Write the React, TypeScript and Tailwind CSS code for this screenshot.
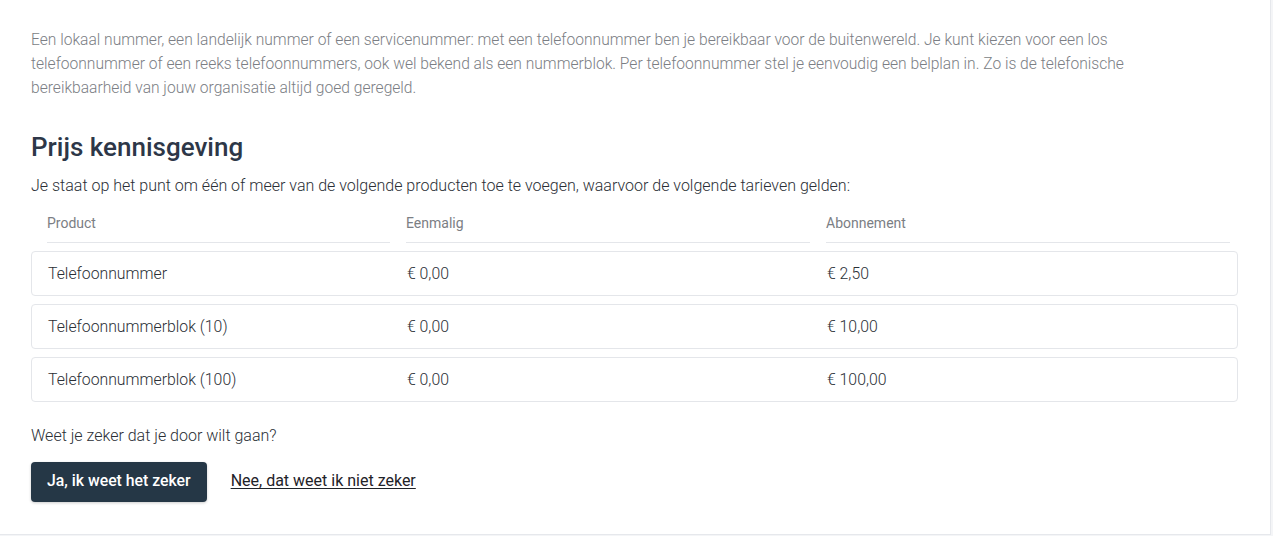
import React from "react";

const rows = [
  { product: "Telefoonnummer", once: "€ 0,00", sub: "€ 2,50" },
  { product: "Telefoonnummerblok (10)", once: "€ 0,00", sub: "€ 10,00" },
  { product: "Telefoonnummerblok (100)", once: "€ 0,00", sub: "€ 100,00" },
];

export default function App() {
  return (
    <div className="min-h-[536px] w-full bg-[#f4f5f7]" style={{ fontFamily: "Roboto, 'Noto Sans', sans-serif" }}>
      <div className="w-[1271px] h-[535px] bg-white border-r border-b border-[#e6e8ec] pl-[31px] pr-[32px] pt-[28px]">
        <p className="max-w-[1140px] text-[15.6px] leading-[24px] font-light text-[#7b7e84]">
          Een lokaal nummer, een landelijk nummer of een servicenummer: met een telefoonnummer ben je bereikbaar voor de buitenwereld. Je kunt kiezen voor een los telefoonnummer of een reeks telefoonnummers, ook wel bekend als een nummerblok. Per telefoonnummer stel je eenvoudig een belplan in. Zo is de telefonische bereikbaarheid van jouw organisatie altijd goed geregeld.
        </p>
        <h2 className="mt-[31px] text-[26px] leading-[32px] font-medium text-[#2d3748]">Prijs kennisgeving</h2>
        <p className="mt-[11px] text-[16px] leading-[24px] font-light text-[#2b2f36]">
          Je staat op het punt om één of meer van de volgende producten toe te voegen, waarvoor de volgende tarieven gelden:
        </p>
        <div className="mt-[14px] grid grid-cols-[343px_404px_404px] gap-x-4 pl-4 pr-2">
          {["Product", "Eenmalig", "Abonnement"].map((h) => (
            <div key={h} className="text-[14px] leading-[20px] pt-[1px] text-[#7b7e84] pb-[9px] border-b border-[#e4e6ea]">
              {h}
            </div>
          ))}
        </div>
        <div className="mt-[8px] flex flex-col gap-[8px]">
          {rows.map((r) => (
            <div
              key={r.product}
              className="h-[45px] grid grid-cols-[343px_404px_404px] gap-x-4 pl-4 pr-2 items-center border border-[#e4e6ea] rounded-[4px] text-[15.8px] font-light text-[#2b2f36]"
            >
              <div>{r.product}</div>
              <div>{r.once}</div>
              <div>{r.sub}</div>
            </div>
          ))}
        </div>
        <p className="mt-[22px] text-[16px] leading-[24px] font-light text-[#2b2f36]">Weet je zeker dat je door wilt gaan?</p>
        <div className="mt-[14px] flex items-center gap-6">
          <button className="h-[40px] px-4 pb-[2px] rounded-[4px] bg-[#253746] text-white text-[15.8px] font-medium shadow-[0_1px_3px_rgba(0,0,0,0.2)]">
            Ja, ik weet het zeker
          </button>
          <a className="text-[16px] pb-[2px] text-[#1f2329] underline underline-offset-2">Nee, dat weet ik niet zeker</a>
        </div>
      </div>
    </div>
  );
}
